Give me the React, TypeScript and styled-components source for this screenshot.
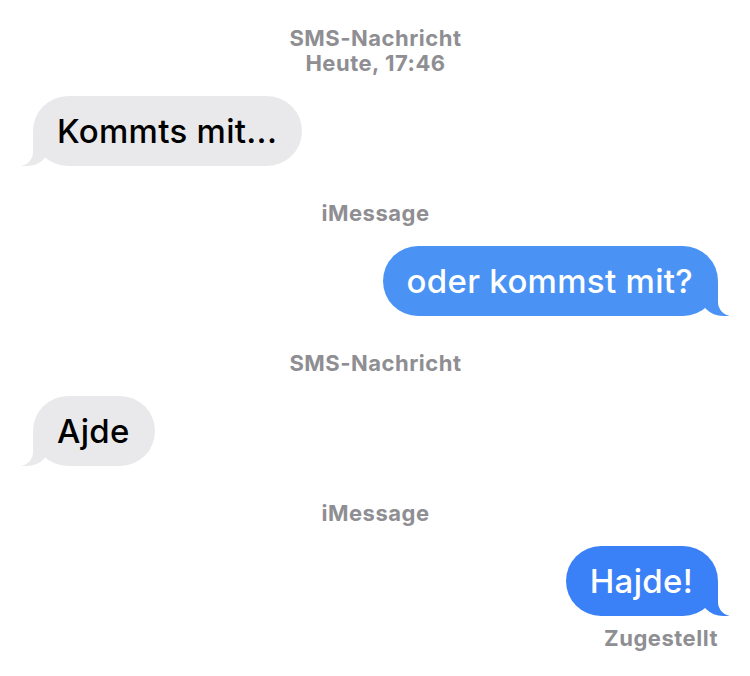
import styled, { createGlobalStyle } from 'styled-components'

const GlobalStyle = createGlobalStyle`
  body {
    margin: 0;
    background: #ffffff;
    font-family: Inter, 'Noto Sans', 'Liberation Sans', sans-serif;
  }
`

const Thread = styled.div`
  display: flex;
  flex-direction: column;
  padding: 26px 32px 0 33px;
`

const Label = styled.div`
  margin: 35px 0 20px;
  text-align: center;
  font-size: 22px;
  line-height: 25px;
  font-weight: 700;
  letter-spacing: 0.5px;
  color: #8e8e93;

  &:first-child {
    margin-top: 0;
  }
`

const Row = styled.div<{ $mine?: boolean }>`
  display: flex;
  justify-content: ${(p) => (p.$mine ? 'flex-end' : 'flex-start')};
`

const Bubble = styled.div<{ $mine?: boolean; $color?: string }>`
  position: relative;
  padding: 16px 25px 16px 24px;
  border-radius: 35px;
  font-size: 33px;
  font-weight: 500;
  line-height: 38px;
  letter-spacing: 0.3px;
  color: ${(p) => (p.$mine ? '#ffffff' : '#000000')};
  background: ${(p) => p.$color || '#e9e9eb'};

  /* der kleine Schwanz unten */
  &::before {
    content: '';
    position: absolute;
    bottom: 0;
    ${(p) => (p.$mine ? 'right: -11px;' : 'left: -12px;')}
    width: 30px;
    height: 34px;
    background: ${(p) => p.$color || '#e9e9eb'};
    ${(p) =>
      p.$mine
        ? 'border-bottom-left-radius: 24px;'
        : 'border-bottom-right-radius: 24px;'}
  }

  &::after {
    content: '';
    position: absolute;
    bottom: 0;
    ${(p) => (p.$mine ? 'right: -20px;' : 'left: -20px;')}
    width: 20px;
    height: 36px;
    background: #ffffff;
    ${(p) =>
      p.$mine
        ? 'border-bottom-left-radius: 14px;'
        : 'border-bottom-right-radius: 14px;'}
  }
`

const Status = styled.div`
  margin-top: 10px;
  text-align: right;
  font-size: 22px;
  line-height: 25px;
  font-weight: 700;
  letter-spacing: 0.5px;
  color: #8e8e93;
`

export default function App() {
  return (
    <>
      <GlobalStyle />
      <Thread>
        <Label>
          SMS-Nachricht
          <br />
          Heute, 17:46
        </Label>
        <Row>
          <Bubble>Kommts mit...</Bubble>
        </Row>

        <Label>iMessage</Label>
        <Row $mine>
          <Bubble $mine $color="#4a93f5">
            oder kommst mit?
          </Bubble>
        </Row>

        <Label>SMS-Nachricht</Label>
        <Row>
          <Bubble>Ajde</Bubble>
        </Row>

        <Label>iMessage</Label>
        <Row $mine>
          <Bubble $mine $color="#3a80f6">
            Hajde!
          </Bubble>
        </Row>
        <Status>Zugestellt</Status>
      </Thread>
    </>
  )
}
